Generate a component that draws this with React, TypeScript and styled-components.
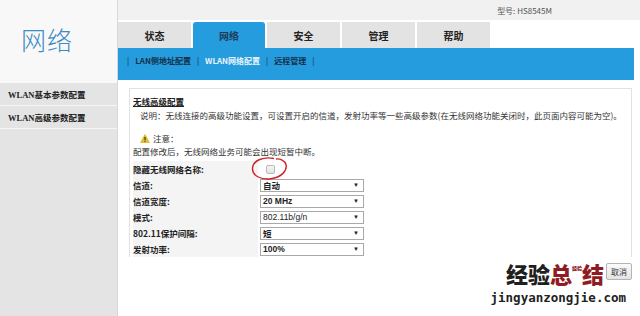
import React from "react";
import styled, { createGlobalStyle } from "styled-components";

const GlobalStyle = createGlobalStyle`
  html, body {
    margin: 0;
    padding: 0;
    background: #ffffff;
    font-family: "Liberation Sans", "Noto Sans CJK SC", sans-serif;
    color: #222;
  }
  * { box-sizing: border-box; }
`;

const tabs = ["状态", "网络", "安全", "管理", "帮助"];
const subLinks = ["LAN侧地址配置", "WLAN网络配置", "远程管理"];
const rows = [
  { label: "隐藏无线网络名称:", type: "check" },
  { label: "信道:", value: "自动" },
  { label: "信道宽度:", value: "20 MHz" },
  { label: "模式:", value: "802.11b/g/n", thin: true },
  { label: "802.11保护间隔:", value: "短" },
  { label: "发射功率:", value: "100%" },
];

const App = () => {
  return (
    <Page>
      <GlobalStyle />
      <Sidebar>
        <Logo>网络</Logo>
        <SideMenu>
          <SideItem>WLAN基本参数配置</SideItem>
          <SideItem>WLAN高级参数配置</SideItem>
        </SideMenu>
      </Sidebar>
      <Main>
        <TopBar>型号: HS8545M</TopBar>
        <TabRow>
          {tabs.map((t) => (
            <Tab key={t} $active={t === "网络"}>
              {t}
            </Tab>
          ))}
        </TabRow>
        <SubNav>
          <Sep>|</Sep>
          {subLinks.map((s) => (
            <React.Fragment key={s}>
              <SubLink $active={s === "WLAN网络配置"}>{s}</SubLink>
              <Sep>|</Sep>
            </React.Fragment>
          ))}
        </SubNav>
        <Content>
          <Panel>
            <Title>无线高级配置</Title>
            <Desc>
              说明：无线连接的高级功能设置，可设置开启的信道，发射功率等一些高级参数(在无线网络功能关闭时，此页面内容可能为空)。
            </Desc>
            <Notice>
              <WarnIcon viewBox="0 0 12 11">
                <path d="M6 0.6 L11.4 10.4 H0.6 Z" fill="#e8c020" stroke="#c79a10" strokeWidth="0.6" />
                <rect x="5.4" y="3.6" width="1.2" height="4" fill="#222" />
                <rect x="5.4" y="8.4" width="1.2" height="1.2" fill="#222" />
              </WarnIcon>
              注意：
            </Notice>
            <Desc $flush>配置修改后，无线网络业务可能会出现短暂中断。</Desc>
            <Form>
              {rows.map((r) => (
                <Row key={r.label}>
                  <Label>{r.label}</Label>
                  <Field>
                    {r.type === "check" ? (
                      <CheckWrap>
                        <Check />
                        <Circle viewBox="0 0 40 26">
                          <path
                            d="M24 2.5 C14 0.5 3 4 2.5 12 C2 20 12 24.5 22 22.5 C31 21 37.5 15 36 8.5 C35 4.5 30 2.5 26 3"
                            fill="none"
                            stroke="#d4202a"
                            strokeWidth="1.4"
                          />
                        </Circle>
                      </CheckWrap>
                    ) : (
                      <Select $thin={r.thin}>
                        <span>{r.value}</span>
                        <Arrow>▼</Arrow>
                      </Select>
                    )}
                  </Field>
                </Row>
              ))}
            </Form>
          </Panel>
          <Actions>
            <Button>取消</Button>
            <Watermark>
              <WmBig>
                <span>经验</span>
                <WmRed>总</WmRed>
                <WmTiny>经验</WmTiny>
                <WmRed>结</WmRed>
              </WmBig>
              <WmUrl>jingyanzongjie.com</WmUrl>
            </Watermark>
          </Actions>
        </Content>
      </Main>
    </Page>
  );
};

export default App;

const Page = styled.div`
  width: 640px;
  height: 316px;
  display: flex;
  overflow: hidden;
`;

const Sidebar = styled.aside`
  width: 118px;
  flex-shrink: 0;
  display: flex;
  flex-direction: column;
  background: #e4e4e4;
  border-right: 1px solid #d8d8d8;
`;

const Logo = styled.div`
  height: 83px;
  background: #f8f8f8;
  display: flex;
  align-items: center;
  padding-left: 21px;
  padding-bottom: 6px;
  font-family: "Noto Sans CJK SC", sans-serif;
  font-size: 25px;
  font-weight: 300;
  letter-spacing: 1px;
  color: #3d8cc4;
`;

const SideMenu = styled.div`
  display: flex;
  flex-direction: column;
`;

const SideItem = styled.div`
  height: 23px;
  display: flex;
  align-items: center;
  padding-left: 8px;
  border-bottom: 1px solid #f6f6f6;
  font-family: "Liberation Serif", "Noto Sans CJK SC", serif;
  font-size: 8.5px;
  font-weight: 700;
  color: #222;
`;

const Main = styled.main`
  flex: 1;
  display: flex;
  flex-direction: column;
  background: #ffffff;
`;

const TopBar = styled.div`
  height: 20px;
  background: #f1f1f1;
  display: flex;
  align-items: center;
  justify-content: flex-end;
  padding-right: 88px;
  font-family: "Noto Sans CJK SC", sans-serif;
  font-size: 8px;
  color: #555;
`;

const TabRow = styled.div`
  display: flex;
  gap: 2px;
  margin-top: 2px;
  height: 26px;
`;

const Tab = styled.div<{ $active?: boolean }>`
  width: ${(p) => (p.$active ? "72px" : "73px")};
  display: flex;
  align-items: center;
  justify-content: center;
  background: ${(p) => (p.$active ? "#259cdd" : "#e3e3e3")};
  border-radius: ${(p) => (p.$active ? "3px 3px 0 0" : "0")};
  font-family: "Noto Sans CJK SC", sans-serif;
  font-size: 10px;
  font-weight: 700;
  color: ${(p) => (p.$active ? "#1d3d5a" : "#222")};
`;

const SubNav = styled.nav`
  height: 32px;
  margin-right: 6px;
  background: #259cdd;
  display: flex;
  align-items: flex-start;
  padding: 7px 0 0 9px;
  gap: 6px;
  font-family: "Noto Sans CJK SC", sans-serif;
  font-size: 8px;
  font-weight: 700;
  color: #1a2f44;
`;

const Sep = styled.span`
  color: #13324d;
  font-weight: 400;
`;

const SubLink = styled.span<{ $active?: boolean }>`
  color: ${(p) => (p.$active ? "#e8f4fb" : "#14304a")};
`;

const Content = styled.div`
  flex: 1;
  padding: 8px 8px 0 11px;
  display: flex;
  flex-direction: column;
`;

const Panel = styled.section`
  border: 1px solid #e2e2e2;
  border-bottom: none;
  padding: 6px 0 0 3px;
  display: flex;
  flex-direction: column;
  font-family: "Noto Sans CJK SC", sans-serif;
  font-size: 8.5px;
`;

const Title = styled.div`
  font-weight: 700;
  text-decoration: underline;
  line-height: 12px;
  margin-bottom: 2px;
`;

const Desc = styled.div<{ $flush?: boolean }>`
  line-height: 13px;
  padding-left: ${(p) => (p.$flush ? "0" : "7px")};
  color: #333;
  white-space: nowrap;
`;

const Notice = styled.div`
  display: flex;
  align-items: center;
  gap: 3px;
  margin-top: 10px;
  padding-left: 7px;
  line-height: 13px;
  color: #333;
`;

const WarnIcon = styled.svg`
  width: 10px;
  height: 9px;
`;

const Form = styled.div`
  display: flex;
  flex-direction: column;
  margin-top: 3px;
`;

const Row = styled.div`
  display: flex;
  height: 16px;
  align-items: stretch;
`;

const Label = styled.div`
  width: 125px;
  background: #f4f4f4;
  display: flex;
  align-items: center;
  font-weight: 700;
  color: #222;
`;

const Field = styled.div`
  display: flex;
  align-items: center;
  padding-left: 2px;
`;

const CheckWrap = styled.div`
  position: relative;
  padding-left: 6px;
  display: flex;
  align-items: center;
`;

const Check = styled.div`
  width: 9px;
  height: 9px;
  border: 1px solid #b8b8b8;
  border-radius: 2px;
  background: linear-gradient(#f6f6f6, #e2e2e2);
`;

const Circle = styled.svg`
  position: absolute;
  left: -10px;
  top: -9px;
  width: 40px;
  height: 26px;
`;

const Select = styled.div<{ $thin?: boolean }>`
  width: 104px;
  height: 13px;
  border: 1px solid #a9a9a9;
  display: flex;
  align-items: center;
  justify-content: space-between;
  padding: 0 4px 0 2px;
  font-family: "Liberation Sans", "Noto Sans CJK SC", sans-serif;
  font-size: 8.5px;
  font-weight: ${(p) => (p.$thin ? 400 : 700)};
  color: #222;
  background: #fff;
`;

const Arrow = styled.span`
  font-size: 6px;
  font-weight: 700;
  color: #222;
`;

const Actions = styled.div`
  position: relative;
  display: flex;
  justify-content: flex-end;
  padding-top: 6px;
`;

const Button = styled.button`
  height: 17px;
  padding: 0 4px;
  border: 1px solid #b4b4b4;
  border-radius: 2px;
  background: linear-gradient(#fbfbfb, #e3e3e3);
  font-family: "Noto Sans CJK SC", sans-serif;
  font-size: 8px;
  color: #333;
`;

const Watermark = styled.div`
  position: absolute;
  right: 6px;
  top: 0px;
  display: flex;
  flex-direction: column;
  align-items: flex-end;
  pointer-events: none;
`;

const WmBig = styled.div`
  display: flex;
  align-items: flex-start;
  font-family: "Noto Sans CJK SC", sans-serif;
  font-size: 22px;
  font-weight: 900;
  line-height: 32px;
  color: #1f1f1f;
  margin-right: 22px;
`;

const WmRed = styled.span`
  color: #8e1c22;
`;

const WmTiny = styled.span`
  font-size: 5px;
  line-height: 6px;
  margin-top: 8px;
  color: #8e1c22;
`;

const WmUrl = styled.div`
  font-family: "DejaVu Sans Mono", monospace;
  font-size: 12.5px;
  font-weight: 700;
  line-height: 14px;
  color: #222;
  margin-top: 2px;
`;
